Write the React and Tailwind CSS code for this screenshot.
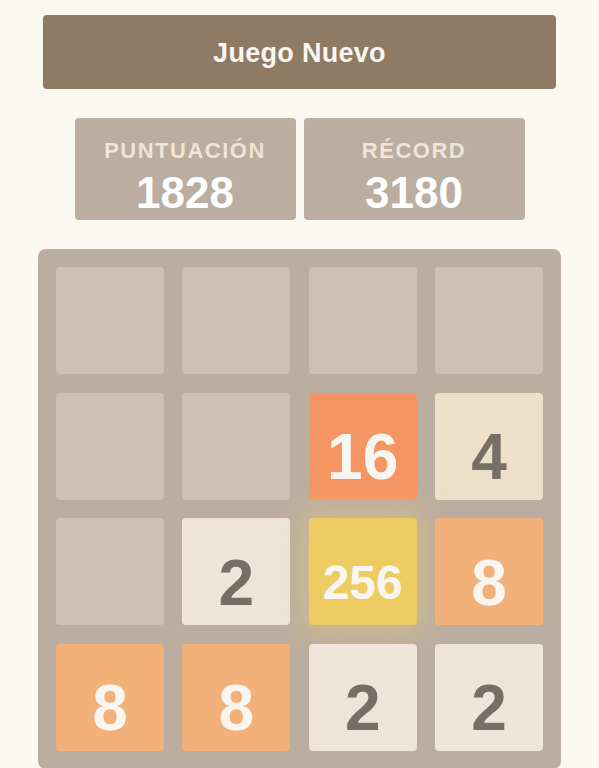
import React from 'react';

const board = [
    [0, 0, 0, 0],
    [0, 0, 16, 4],
    [0, 2, 256, 8],
    [8, 8, 2, 2],
];

const estilos = {
    0: 'bg-[#cdc1b4]',
    2: 'bg-[#eee4da] text-[#776e65] text-[64px]',
    4: 'bg-[#ede0c8] text-[#776e65] text-[64px]',
    8: 'bg-[#f2b179] text-[#f9f6f2] text-[64px]',
    16: 'bg-[#f59563] text-[#f9f6f2] text-[64px]',
    256: 'bg-[#edcc61] text-[#f9f6f2] text-[48px] shadow-[0_0_30px_10px_rgba(243,215,116,0.32)]',
};

function Celda({ valor }) {
    return (
        <div className={`h-[107px] rounded-[4px] flex items-center justify-center pt-[22px] font-bold leading-none ${estilos[valor]}`}>
            {valor > 0 && valor}
        </div>
    );
}

function Marcador({ titulo, valor }) {
    return (
        <div className="w-[221px] h-[102px] rounded-[4px] bg-[#bbada0] flex flex-col items-center pt-[22px]">
            <div className="text-[22px] font-bold leading-none tracking-[1.5px] text-[#eee4da]">{titulo}</div>
            <div className="mt-[9px] text-[44px] font-bold leading-none text-white">{valor}</div>
        </div>
    );
}

export default function App() {
    return (
        <div className="min-h-screen bg-[#faf8ef] overflow-hidden font-['Liberation_Sans',Arial,sans-serif] flex flex-col items-center">
            <button className="mt-[15px] w-[513px] h-[74px] rounded-[4px] bg-[#8f7a66] text-[#f9f6f2] text-[27px] font-bold leading-none pt-[3px] tracking-[0.3px]">
                Juego Nuevo
            </button>

            <div className="mt-[29px] flex gap-[8px]">
                <Marcador titulo="PUNTUACIÓN" valor={1828} />
                <Marcador titulo="RÉCORD" valor={3180} />
            </div>

            <div className="mt-[29px] w-[523px] rounded-[8px] bg-[#bbada0] p-[18px] grid grid-cols-4 gap-x-[18.5px] gap-y-[18.5px]">
                {board.flat().map((v, i) => <Celda key={i} valor={v} />)}
            </div>
        </div>
    );
}
